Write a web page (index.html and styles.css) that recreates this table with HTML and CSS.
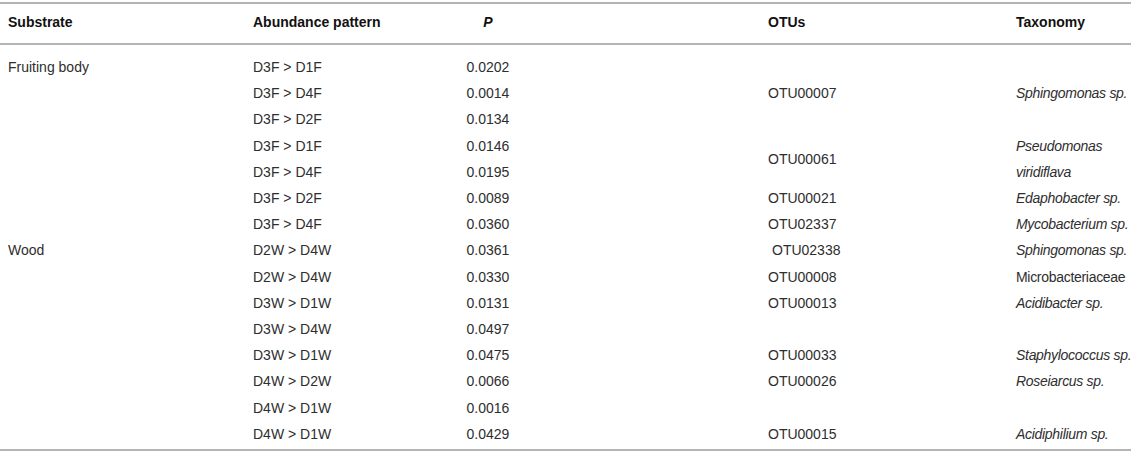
FILE: index.html
```html
<!DOCTYPE html>
<html>
<head>
<meta charset="utf-8">
<link rel="stylesheet" href="styles.css">
</head>
<body>
<table class="tbl">
  <colgroup>
    <col class="c1"><col class="c2"><col class="c3"><col class="c4"><col class="c5">
  </colgroup>
  <thead>
    <tr>
      <th class="sub">Substrate</th>
      <th class="pat">Abundance pattern</th>
      <th class="p"><i>P</i></th>
      <th class="otu">OTUs</th>
      <th class="tax">Taxonomy</th>
    </tr>
  </thead>
  <tbody>
    <tr class="first">
      <td class="sub">Fruiting body</td>
      <td class="pat">D3F &gt; D1F</td>
      <td class="p">0.0202</td>
      <td class="otu" rowspan="3">OTU00007</td>
      <td class="tax" rowspan="3"><i>Sphingomonas sp.</i></td>
    </tr>
    <tr><td class="sub"></td><td class="pat">D3F &gt; D4F</td><td class="p">0.0014</td></tr>
    <tr><td class="sub"></td><td class="pat">D3F &gt; D2F</td><td class="p">0.0134</td></tr>
    <tr>
      <td class="sub"></td><td class="pat">D3F &gt; D1F</td><td class="p">0.0146</td>
      <td class="otu" rowspan="2">OTU00061</td>
      <td class="tax" rowspan="2"><i>Pseudomonas<br>viridiflava</i></td>
    </tr>
    <tr><td class="sub"></td><td class="pat">D3F &gt; D4F</td><td class="p">0.0195</td></tr>
    <tr><td class="sub"></td><td class="pat">D3F &gt; D2F</td><td class="p">0.0089</td><td class="otu">OTU00021</td><td class="tax"><i>Edaphobacter sp.</i></td></tr>
    <tr><td class="sub"></td><td class="pat">D3F &gt; D4F</td><td class="p">0.0360</td><td class="otu">OTU02337</td><td class="tax"><i>Mycobacterium sp.</i></td></tr>
    <tr><td class="sub">Wood</td><td class="pat">D2W &gt; D4W</td><td class="p">0.0361</td><td class="otu"><span class="ind">OTU02338</span></td><td class="tax"><i>Sphingomonas sp.</i></td></tr>
    <tr><td class="sub"></td><td class="pat">D2W &gt; D4W</td><td class="p">0.0330</td><td class="otu">OTU00008</td><td class="tax">Microbacteriaceae</td></tr>
    <tr><td class="sub"></td><td class="pat">D3W &gt; D1W</td><td class="p">0.0131</td><td class="otu">OTU00013</td><td class="tax"><i>Acidibacter sp.</i></td></tr>
    <tr><td class="sub"></td><td class="pat">D3W &gt; D4W</td><td class="p">0.0497</td><td class="otu"></td><td class="tax"></td></tr>
    <tr><td class="sub"></td><td class="pat">D3W &gt; D1W</td><td class="p">0.0475</td><td class="otu">OTU00033</td><td class="tax"><i>Staphylococcus sp.</i></td></tr>
    <tr><td class="sub"></td><td class="pat">D4W &gt; D2W</td><td class="p">0.0066</td><td class="otu">OTU00026</td><td class="tax"><i>Roseiarcus sp.</i></td></tr>
    <tr><td class="sub"></td><td class="pat">D4W &gt; D1W</td><td class="p">0.0016</td><td class="otu"></td><td class="tax"></td></tr>
    <tr class="last"><td class="sub"></td><td class="pat">D4W &gt; D1W</td><td class="p">0.0429</td><td class="otu">OTU00015</td><td class="tax"><i>Acidiphilium sp.</i></td></tr>
  </tbody>
</table>
</body>
</html>
```

FILE: styles.css
```css
html, body {
  margin: 0;
  padding: 0;
  background: #ffffff;
}

body {
  font-family: "Liberation Sans", Arial, sans-serif;
  font-size: 14px;
  color: #2e2e2e;
}

.tbl {
  margin-top: 2px;
  width: 1131px;
  border-collapse: collapse;
  table-layout: fixed;
  border-top: 2px solid #b4b4b4;
  border-bottom: 2px solid #b4b4b4;
}

.c1 { width: 245px; }
.c2 { width: 155px; }
.c3 { width: 176px; }
.c4 { width: 432px; }
.c5 { width: 123px; }

th, td {
  padding: 0;
  vertical-align: middle;
  text-align: left;
}

th {
  font-weight: bold;
  color: #111111;
  line-height: 17px;
  padding-top: 10px;
  padding-bottom: 12px;
  border-bottom: 2px solid #b4b4b4;
}

td {
  line-height: 26.2px;
  white-space: nowrap;
}

td.tax {
  letter-spacing: -0.3px;
}

.sub { padding-left: 8px; }
.pat { padding-left: 8px; }
.p { text-align: center; }
.otu { padding-left: 192px; }
.tax { padding-left: 8px; }

.ind { padding-left: 4px; }

tr.first td { padding-top: 9px; }
tr.last td { padding-bottom: 2px; }
```
